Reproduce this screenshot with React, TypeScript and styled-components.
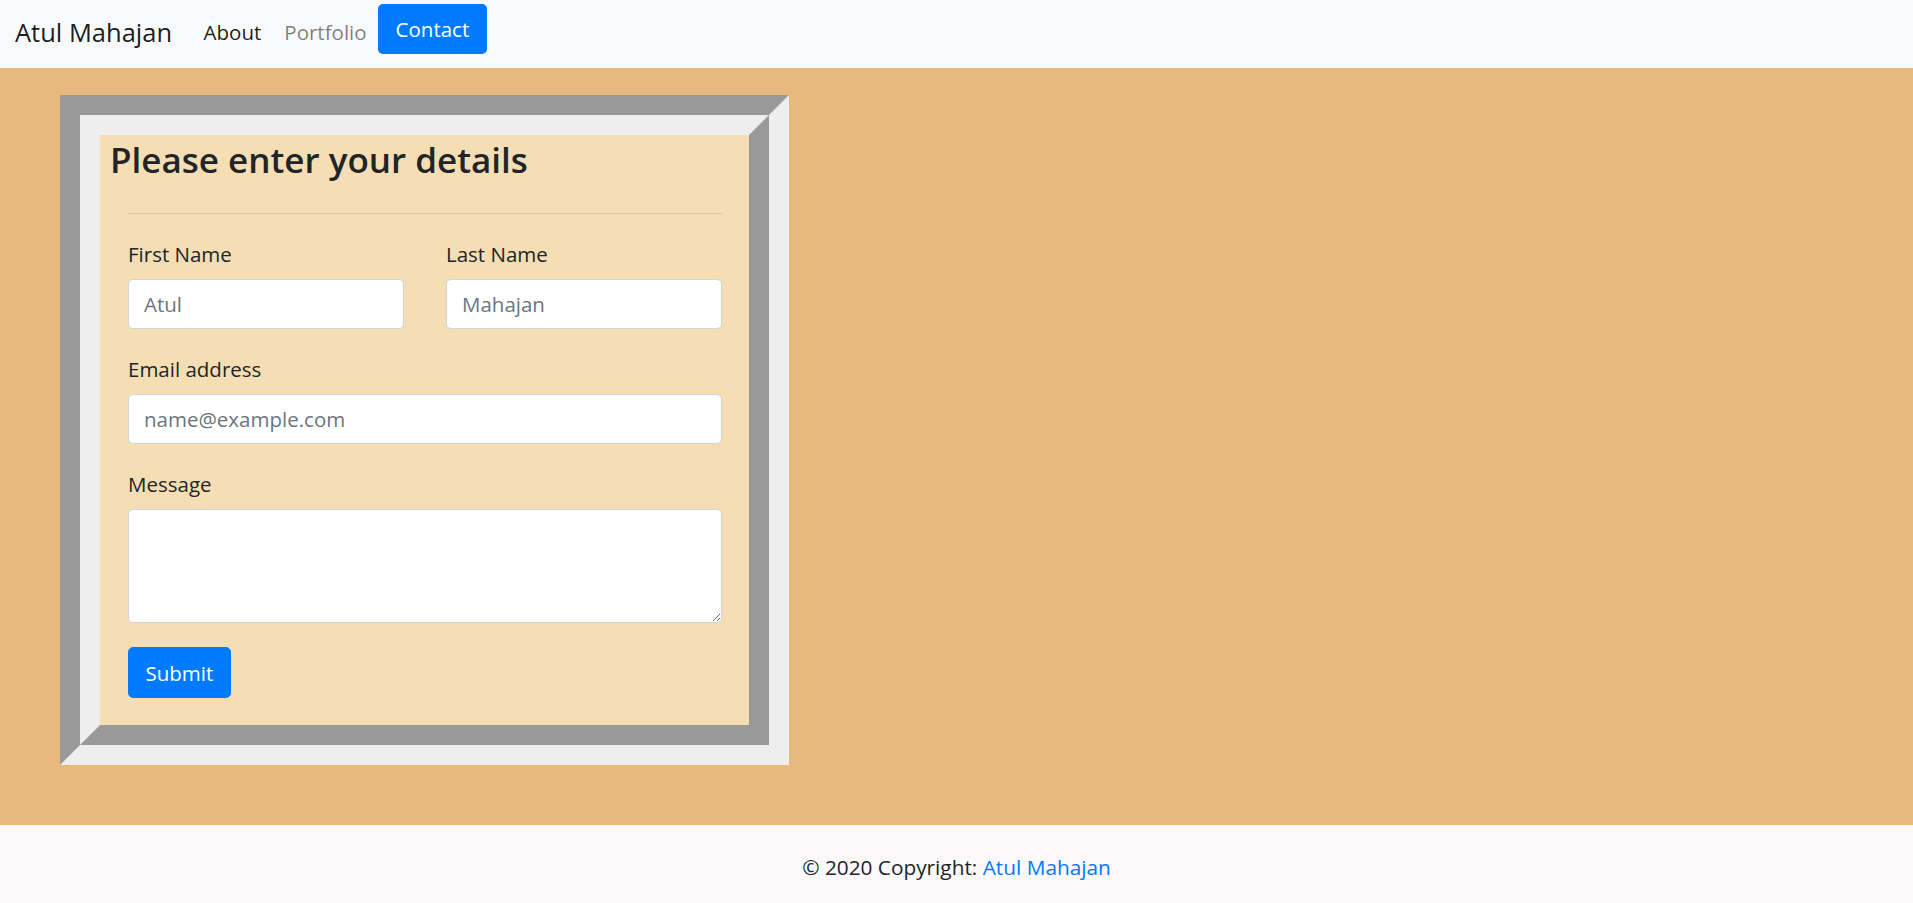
import React from "react";
import styled, { createGlobalStyle } from "styled-components";

const GlobalStyle = createGlobalStyle`
  *, *::before, *::after { box-sizing: border-box; }
  html, body { margin: 0; padding: 0; }
  body {
    font-family: "Open Sans", "Noto Sans", sans-serif;
    font-size: 20.5px;
    line-height: 30px;
    color: #212529;
    background: #ffffff;
  }
`;

const Page = styled.div`
  display: flex;
  flex-direction: column;
  min-height: 903px;
`;

const NavBar = styled.nav`
  display: flex;
  align-items: center;
  height: 68px;
  padding: 0 15px 4px;
  background: #f8f9fa;
`;

const Brand = styled.a`
  font-size: 25.5px;
  line-height: 38px;
  color: rgba(0, 0, 0, 0.9);
  text-decoration: none;
  margin-right: 20px;
`;

const NavList = styled.div`
  display: flex;
  align-items: center;
`;

const NavLink = styled.a<{ $active?: boolean; $pill?: boolean }>`
  font-size: 20.5px;
  line-height: 30px;
  text-decoration: none;
  padding: ${(p) => (p.$pill ? "10px 17.5px" : "0 11.5px")};
  color: ${(p) =>
    p.$pill ? "#ffffff" : p.$active ? "rgba(0,0,0,0.9)" : "rgba(0,0,0,0.5)"};
  background: ${(p) => (p.$pill ? "#007bff" : "transparent")};
  border-radius: ${(p) => (p.$pill ? "5px" : "0")};
  margin-bottom: ${(p) => (p.$pill ? "6px" : "0")};
`;

const Main = styled.main`
  flex: 1;
  background: #e7b97d;
  padding: 27px 60px 60px;
  display: flex;
  align-items: flex-start;
`;

const OuterFrame = styled.div`
  border: 20px solid;
  border-color: #999999 #eeeeee #eeeeee #999999;
`;

const InnerFrame = styled.div`
  border: 20px solid;
  border-color: #eeeeee #999999 #999999 #eeeeee;
`;

const Panel = styled.section`
  width: 649px;
  background: #f5deb3;
  padding: 4px 0 27px;
`;

const Title = styled.h2`
  margin: 0;
  padding-left: 10px;
  font-size: 35px;
  line-height: 42px;
  font-weight: 600;
  color: #212529;
`;

const FormBody = styled.form`
  padding: 0 27px 0 28px;
`;

const Rule = styled.hr`
  margin: 32px 0 25px;
  border: 0;
  border-top: 1px solid rgba(0, 0, 0, 0.1);
`;

const Row = styled.div`
  display: grid;
  grid-template-columns: 1fr 1fr;
  column-gap: 42px;
`;

const Group = styled.div<{ $last?: boolean }>`
  display: flex;
  flex-direction: column;
  margin-bottom: ${(p) => (p.$last ? "24px" : "25px")};
`;

const Label = styled.label`
  font-size: 20.5px;
  line-height: 30px;
  margin-bottom: 10px;
  color: #212529;
`;

const Input = styled.input`
  width: 100%;
  height: 50px;
  padding: 0 15px;
  font-family: inherit;
  font-size: 20.5px;
  color: #495057;
  background: #ffffff;
  border: 1px solid #ced4da;
  border-radius: 5px;
  outline: none;
  &::placeholder { color: #6c757d; opacity: 1; }
`;

const TextArea = styled.textarea`
  width: 100%;
  height: 114px;
  padding: 8px 15px;
  font-family: inherit;
  font-size: 20.5px;
  color: #495057;
  background: #ffffff;
  border: 1px solid #ced4da;
  border-radius: 5px;
  outline: none;
  display: block;
`;

const SubmitButton = styled.button`
  height: 51px;
  padding: 0 16.5px;
  font-family: inherit;
  font-size: 20.5px;
  line-height: 30px;
  color: #ffffff;
  background: #007bff;
  border: 1px solid #007bff;
  border-radius: 5px;
  cursor: pointer;
`;

const Footer = styled.footer`
  height: 78px;
  background: #faf8f8;
  text-align: center;
  padding-top: 27px;
  font-size: 20.8px;
  line-height: 30px;
  color: #212529;
`;

const FooterLink = styled.a`
  color: #007bff;
  text-decoration: none;
`;

export default function App() {
  return (
    <Page>
      <GlobalStyle />
      <NavBar>
        <Brand href="#">Atul Mahajan</Brand>
        <NavList>
          <NavLink href="#" $active>
            About
          </NavLink>
          <NavLink href="#">Portfolio</NavLink>
          <NavLink href="#" $pill>
            Contact
          </NavLink>
        </NavList>
      </NavBar>
      <Main>
        <OuterFrame>
          <InnerFrame>
            <Panel>
              <Title>Please enter your details</Title>
              <FormBody onSubmit={(e) => e.preventDefault()}>
                <Rule />
                <Row>
                  <Group>
                    <Label htmlFor="first">First Name</Label>
                    <Input id="first" placeholder="Atul" />
                  </Group>
                  <Group>
                    <Label htmlFor="last">Last Name</Label>
                    <Input id="last" placeholder="Mahajan" />
                  </Group>
                </Row>
                <Group>
                  <Label htmlFor="email">Email address</Label>
                  <Input id="email" type="email" placeholder="name@example.com" />
                </Group>
                <Group $last>
                  <Label htmlFor="msg">Message</Label>
                  <TextArea id="msg" />
                </Group>
                <SubmitButton type="submit">Submit</SubmitButton>
              </FormBody>
            </Panel>
          </InnerFrame>
        </OuterFrame>
      </Main>
      <Footer>
        © 2020 Copyright: <FooterLink href="#">Atul Mahajan</FooterLink>
      </Footer>
    </Page>
  );
}
